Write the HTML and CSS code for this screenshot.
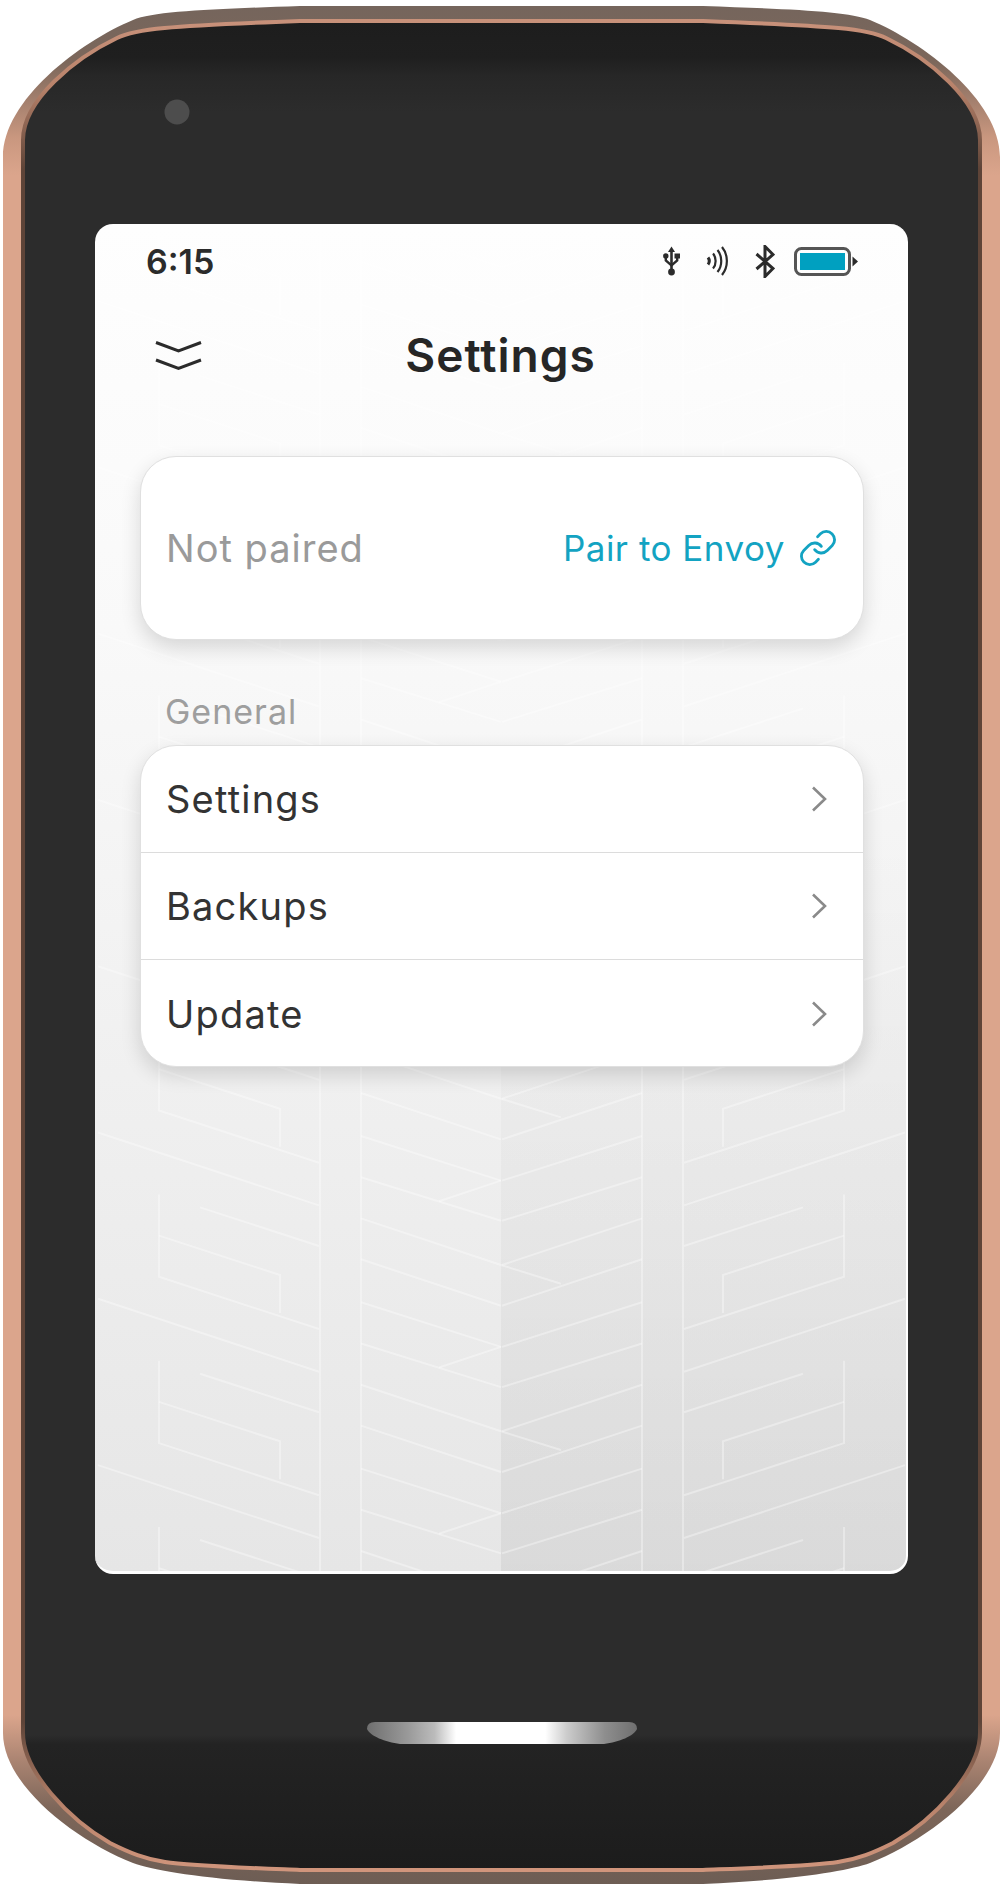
FILE: index.html
```html
<!DOCTYPE html>
<html lang="en">
<head>
    <meta charset="UTF-8">
    <title>Settings</title>
    <link rel="stylesheet" href="styles.css">
</head>
<body>
    <div class="device">
        <!-- hardware: rim, bezel, camera and home bar -->
        <svg class="hardware" width="1004" height="1890" viewBox="0 0 1004 1890">
            <defs>
                <linearGradient id="rimFill" x1="0" y1="0" x2="0" y2="1">
                    <stop offset="0" stop-color="#75655c"/>
                    <stop offset="0.03" stop-color="#7c675b"/>
                    <stop offset="0.07" stop-color="#c9977f"/>
                    <stop offset="0.09" stop-color="#dba58c"/>
                    <stop offset="0.91" stop-color="#dba58c"/>
                    <stop offset="0.935" stop-color="#a98371"/>
                    <stop offset="0.96" stop-color="#7d6659"/>
                    <stop offset="1" stop-color="#6d5d54"/>
                </linearGradient>
                <linearGradient id="rimEdge" x1="0" y1="0" x2="0" y2="1">
                    <stop offset="0" stop-color="#c8917a"/>
                    <stop offset="0.035" stop-color="#b9836b"/>
                    <stop offset="0.08" stop-color="#5e4438"/>
                    <stop offset="0.92" stop-color="#5e4438"/>
                    <stop offset="0.965" stop-color="#b9836b"/>
                    <stop offset="1" stop-color="#d0957c"/>
                </linearGradient>
                <linearGradient id="bezelFill" gradientUnits="userSpaceOnUse" x1="0" y1="20" x2="0" y2="1870">
                    <stop offset="0" stop-color="#1d1d1d"/>
                    <stop offset="0.02" stop-color="#1f1f1f"/>
                    <stop offset="0.03" stop-color="#272727"/>
                    <stop offset="0.05" stop-color="#2c2c2c"/>
                    <stop offset="0.927" stop-color="#2c2c2c"/>
                    <stop offset="0.932" stop-color="#232323"/>
                    <stop offset="1" stop-color="#1c1c1c"/>
                </linearGradient>
                <linearGradient id="homeFill" x1="0" y1="0" x2="1" y2="0">
                    <stop offset="0" stop-color="#6f6f6f"/>
                    <stop offset="0.15" stop-color="#999"/>
                    <stop offset="0.25" stop-color="#bbb"/>
                    <stop offset="0.33" stop-color="#fff"/>
                    <stop offset="0.66" stop-color="#fff"/>
                    <stop offset="0.74" stop-color="#ccc"/>
                    <stop offset="0.88" stop-color="#8e8e8e"/>
                    <stop offset="1" stop-color="#6f6f6f"/>
                </linearGradient>
            </defs>
            <path fill="url(#rimFill)" d="M3 157C3 100 80 42 133 20C155 11 215 9 300 6L703 6C788 9 848 11 870 20C923 42 1000 100 1000 157L1000 1733C1000 1785 928 1840 870 1863C848 1871 793 1880 703 1884L300 1884C210 1880 155 1871 133 1863C75 1840 3 1785 3 1733Z"/>
            <path fill="url(#bezelFill)" stroke="url(#rimEdge)" stroke-width="4" d="M23 140C23 100 75 58 117 38C135 29 165 26 300 21L703 21C838 26 868 29 886 38C928 58 980 100 980 140L980 1733C980 1772 933 1820 893 1843C873 1853 858 1859 838 1862C813 1866 753 1868 703 1870L300 1870C250 1868 190 1866 165 1862C145 1859 130 1853 110 1843C70 1820 23 1772 23 1733Z"/>
            <circle cx="177" cy="112" r="12.5" fill="#4d4d4d"/>
            <path fill="url(#homeFill)" d="M367 1729Q367 1722 375 1722L629 1722Q637 1722 637 1729C634 1736 619 1742 604 1744L400 1744C385 1742 370 1736 367 1729Z"/>
        </svg>

        <div class="screen">
            <!-- tread pattern behind the content -->
            <svg class="tread" width="813" height="1350" viewBox="0 0 813 1350">
                <defs>
                    <g id="treadTile" fill="none">
                        <path d="M3 39.5L224 112.4"/>
                        <path d="M105 114.4L224 153"/>
                        <path d="M64 142.6L185 182V220"/>
                        <path d="M64 101.4V183.8L224 236"/>
                        <path d="M266 0L406 46.4"/>
                        <path d="M266 43L406 87.6"/>
                        <path d="M266 84.2L406 127.8"/>
                        <path d="M266 125.4L406 172"/>
                    </g>
                    <g id="treadHalf">
                        <path d="M225 0V1350M266 0V1350" fill="none"/>
                        <use href="#treadTile" y="-129"/>
                        <use href="#treadTile" y="37.5"/>
                        <use href="#treadTile" y="203.8"/>
                        <use href="#treadTile" y="370.1"/>
                        <use href="#treadTile" y="536.4"/>
                        <use href="#treadTile" y="702.7"/>
                        <use href="#treadTile" y="869"/>
                        <use href="#treadTile" y="1035.3"/>
                        <use href="#treadTile" y="1201.6"/>
                    </g>
                    <g id="treadJoin" fill="none">
                        <path d="M344 108.2L406 87.6"/>
                        <path d="M406 172L466 190.7"/>
                    </g>
                </defs>
                <g class="tread-lines">
                    <use href="#treadHalf"/>
                    <use href="#treadHalf" transform="translate(813 0) scale(-1 1)"/>
                    <use href="#treadJoin" y="37.5"/>
                    <use href="#treadJoin" y="203.8"/>
                    <use href="#treadJoin" y="370.1"/>
                    <use href="#treadJoin" y="536.4"/>
                    <use href="#treadJoin" y="702.7"/>
                    <use href="#treadJoin" y="869"/>
                    <use href="#treadJoin" y="1035.3"/>
                    <use href="#treadJoin" y="1201.6"/>
                </g>
            </svg>

            <div class="status-bar">
                <span class="time">6:15</span>
                <div class="status-icons">
                    <svg class="icon-usb" width="17" height="30" viewBox="0 0 17 30">
                        <path d="M8.5 0.5L5 6H12Z" fill="#2b2b2b"/>
                        <path d="M8.5 5V25" stroke="#2b2b2b" stroke-width="2.6" fill="none"/>
                        <path d="M2.8 11V14.5L8.5 19.5L14.2 14.5V11" stroke="#2b2b2b" stroke-width="2.4" fill="none"/>
                        <circle cx="2.8" cy="10" r="2.7" fill="#2b2b2b"/>
                        <rect x="11.5" y="7.5" width="5.5" height="5" fill="#2b2b2b"/>
                        <circle cx="8.5" cy="26" r="3.4" fill="#2b2b2b"/>
                    </svg>
                    <svg class="icon-nfc" width="23" height="30" viewBox="0 0 23 30">
                        <path d="M2 11.5C3.5 13.5 3.5 16.5 2 18.5" stroke="#2b2b2b" stroke-width="3" fill="none"/>
                        <path d="M7 7.5C10.5 11.5 10.5 18.5 7 22.5" stroke="#2b2b2b" stroke-width="2.2" fill="none"/>
                        <path d="M11.5 4C16.5 10 16.5 20 11.5 26" stroke="#2b2b2b" stroke-width="2.2" fill="none"/>
                        <path d="M16 1C22.5 9 22.5 21 16 29" stroke="#2b2b2b" stroke-width="2.2" fill="none"/>
                    </svg>
                    <svg class="icon-bt" width="20" height="33" viewBox="0 0 20 33">
                        <path d="M1.5 9L18 23.5L10 31.5V1.5L18 9.5L1.5 24" stroke="#2b2b2b" stroke-width="3" fill="none"/>
                    </svg>
                    <svg class="icon-battery" width="64" height="29" viewBox="0 0 64 29">
                        <rect x="1.5" y="1.5" width="54" height="26" rx="6" fill="none" stroke="#555" stroke-width="3"/>
                        <rect x="6" y="6" width="45" height="17" fill="#00a0c0"/>
                        <path d="M58.5 9.5L64 14.5L58.5 19.5Z" fill="#2b2b2b"/>
                    </svg>
                </div>
            </div>

            <div class="title-bar">
                <svg class="icon-menu" width="47" height="31" viewBox="0 0 47 31">
                    <path d="M1 2.5L23.5 11L46 2.5" fill="none" stroke="#2b2b2b" stroke-width="3"/>
                    <path d="M1 20L23.5 28.5L46 20" fill="none" stroke="#2b2b2b" stroke-width="3"/>
                </svg>
                <h1 class="title">Settings</h1>
            </div>

            <div class="content">
                <div class="card pair-card">
                    <span class="not-paired">Not paired</span>
                    <a class="pair-link">
                        Pair to Envoy
                        <svg width="40" height="40" viewBox="0 0 24 24" fill="none" stroke="#13a3c2" stroke-width="1.7" stroke-linecap="round" stroke-linejoin="round">
                            <path d="M10 13a5 5 0 0 0 7.54.54l3-3a5 5 0 0 0-7.07-7.07l-1.72 1.71"/>
                            <path d="M14 11a5 5 0 0 0-7.54-.54l-3 3a5 5 0 0 0 7.07 7.07l1.71-1.71"/>
                        </svg>
                    </a>
                </div>

                <div class="section-label">General</div>

                <div class="card menu-card">
                    <div class="menu-row">
                        <span>Settings</span>
                        <svg width="16" height="26" viewBox="0 0 16 26"><path d="M2 1.5L14 13L2 24.5" fill="none" stroke="#8a8a8a" stroke-width="2.6"/></svg>
                    </div>
                    <div class="menu-row">
                        <span>Backups</span>
                        <svg width="16" height="26" viewBox="0 0 16 26"><path d="M2 1.5L14 13L2 24.5" fill="none" stroke="#8a8a8a" stroke-width="2.6"/></svg>
                    </div>
                    <div class="menu-row">
                        <span>Update</span>
                        <svg width="16" height="26" viewBox="0 0 16 26"><path d="M2 1.5L14 13L2 24.5" fill="none" stroke="#8a8a8a" stroke-width="2.6"/></svg>
                    </div>
                </div>
            </div>
        </div>
    </div>
</body>
</html>
```
FILE: styles.css
```css
* {
    margin: 0;
    padding: 0;
    box-sizing: border-box;
}

body {
    font-family: 'Inter', 'Noto Sans', sans-serif;
    background: white;
    color: #2b2b2b;
}

.device {
    position: relative;
    width: 1004px;
    height: 1890px;
    padding: 224px 96px 0 95px;
}

.hardware {
    position: absolute;
    top: 0;
    left: 0;
}

.screen {
    position: relative;
    height: 1350px;
    border-radius: 18px;
    overflow: hidden;
    border-right: 2px solid white;
    border-bottom: 3px solid white;
    background:
        linear-gradient(to bottom, rgba(0, 0, 0, 0) 45%, rgba(0, 0, 0, 0.055) 100%) right / 50% 100% no-repeat,
        linear-gradient(to bottom, #fefefe 0%, #f9f9f9 30%, #e6e6e6 100%);
}

.tread {
    position: absolute;
    top: 0;
    left: 0;
}

.tread-lines {
    stroke: rgba(255, 255, 255, 0.35);
    stroke-width: 2;
}

.status-bar {
    position: relative;
    height: 74px;
    padding: 0 48px 0 51px;
    display: flex;
    align-items: center;
    justify-content: space-between;
}

.time {
    font-size: 34px;
    font-weight: 600;
}

.status-icons {
    display: flex;
    align-items: center;
    gap: 26px;
}

.icon-bt {
    margin-right: -7px;
}

.title-bar {
    position: relative;
    height: 114px;
    padding: 0 60px;
    display: grid;
    grid-template-columns: 1fr auto 1fr;
    align-items: center;
}

.title {
    font-size: 46px;
    font-weight: 600;
    letter-spacing: 1px;
    grid-column: 2;
    color: #262626;
}

.icon-menu {
    grid-column: 1;
    grid-row: 1;
}

.content {
    position: relative;
    margin-top: 44px;
    padding: 0 42px 0 45px;
}

.card {
    background: white;
    border: 1px solid #e0e0e0;
    border-radius: 36px;
    box-shadow: 0 8px 20px rgba(0, 0, 0, 0.14);
}

.pair-card {
    height: 184px;
    padding: 0 25px;
    display: flex;
    align-items: center;
    justify-content: space-between;
}

.not-paired {
    font-size: 38px;
    letter-spacing: 1px;
    color: #9a9a9a;
}

.pair-link {
    display: flex;
    align-items: center;
    gap: 13px;
    font-size: 35px;
    letter-spacing: 0.5px;
    color: #13a3c2;
}

.section-label {
    height: 34px;
    line-height: 34px;
    margin: 55px 0 16px;
    padding-left: 25px;
    font-size: 34px;
    letter-spacing: 1px;
    color: #9e9e9e;
}

.menu-card {
    height: 322px;
    overflow: hidden;
}

.menu-row {
    height: 107px;
    padding: 0 36px 0 25px;
    display: flex;
    align-items: center;
    justify-content: space-between;
    border-bottom: 1px solid #dcdcdc;
    font-size: 38px;
    letter-spacing: 1.2px;
    color: #333;
}

.menu-row:last-child {
    border-bottom: none;
}
```
